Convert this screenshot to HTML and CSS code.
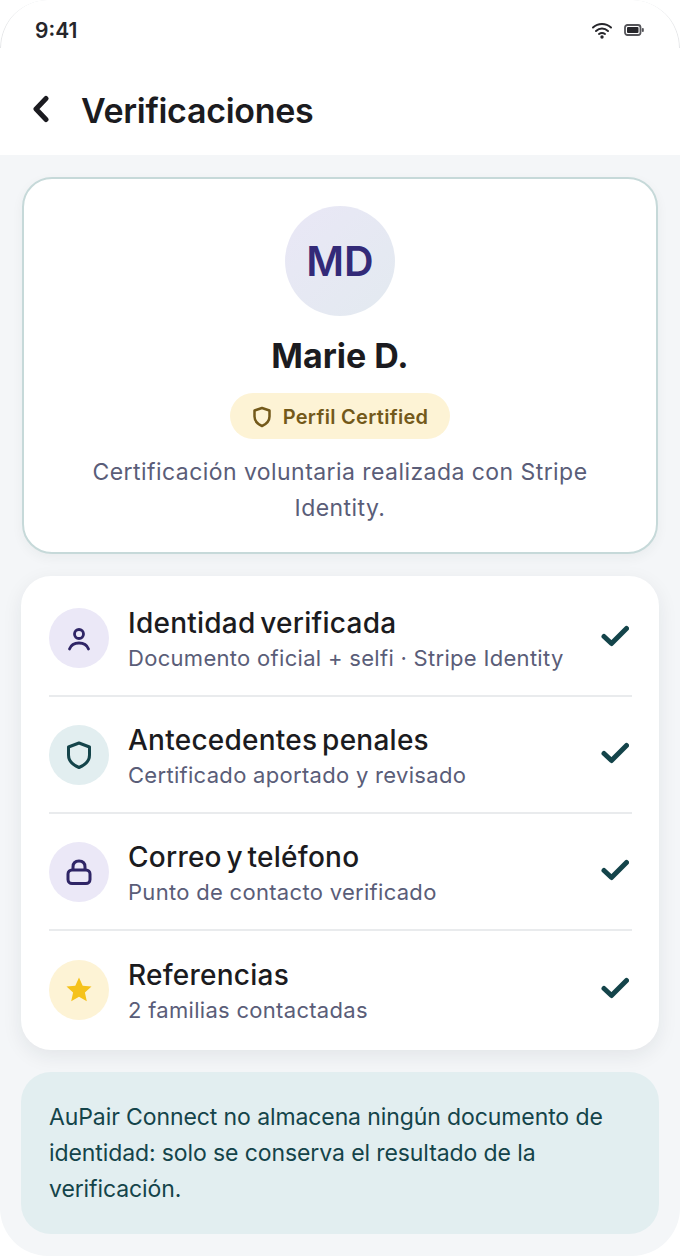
FILE: index.html
```html
<!DOCTYPE html>
<html lang="es">
<head>
  <meta charset="UTF-8">
  <meta name="viewport" content="width=device-width, initial-scale=1.0">
  <title>Verificaciones</title>
  <link rel="stylesheet" href="styles.css">
</head>
<body>
  <div class="phone">
    <div class="top">
      <div class="status">
        <span class="time">9:41</span>
        <div class="status-icons">
          <svg width="22" height="18" viewBox="0 0 22 18" fill="none" stroke="#26262b" stroke-width="2" stroke-linecap="round">
            <path d="M2 6.5C7 1.8 15 1.8 20 6.5"/>
            <path d="M5 10C8.5 6.8 13.500 6.800 17 10"/>
            <path d="M8 13C9.800 11.700 12.200 11.700 14 13"/>
            <circle cx="11" cy="16" r="1.700" fill="#26262b" stroke="none"/>
          </svg>
          <svg width="20" height="12" viewBox="0 0 20 12" fill="none">
            <rect x="1" y="1" width="15.500" height="10" rx="2.500" stroke="#55555a" stroke-width="1.800"/>
            <rect x="3" y="3" width="11.500" height="6" rx="1" fill="#26262b"/>
            <rect x="17.800" y="4" width="2" height="4" rx="1" fill="#55555a"/>
          </svg>
        </div>
      </div>
      <header class="header">
        <svg class="back" width="20" height="28" viewBox="0 0 20 28" fill="none" stroke="#1b1b20" stroke-width="5" stroke-linecap="round" stroke-linejoin="round">
          <path d="M15 3.500L5 14L15 24.500"/>
        </svg>
        <h1>Verificaciones</h1>
      </header>
    </div>

    <main class="content">
      <section class="hero">
        <div class="avatar">MD</div>
        <h2>Marie D.</h2>
        <div class="badge">
          <svg width="20" height="22" viewBox="0 0 20 22" fill="none" stroke="#73591a" stroke-width="2.500" stroke-linejoin="round">
            <path d="M10 2L17.500 4.500V10.500C17.500 15 14.500 18 10 20C5.500 18 2.500 15 2.500 10.500V4.500Z"/>
          </svg>
          <span>Perfil Certified</span>
        </div>
        <p>Certificación voluntaria realizada con Stripe Identity.</p>
      </section>

      <section class="list">
        <div class="row">
          <div class="icon icon-purple">
            <svg width="24" height="26" viewBox="0 0 24 26" fill="none" stroke="#2f2566" stroke-width="2.800" stroke-linecap="round">
              <circle cx="12" cy="9" r="4.500"/>
              <path d="M2.500 24C4 20 8 18 12 18C16 18 20 20 21.500 24"/>
            </svg>
          </div>
          <div class="text">
            <h3>Identidad verificada</h3>
            <p>Documento oficial + selfi · Stripe Identity</p>
          </div>
          <svg class="check" width="28" height="22" viewBox="0 0 28 22" fill="none" stroke="#14444a" stroke-width="5" stroke-linecap="round" stroke-linejoin="round"><path d="M3 11.500L10.500 18.500L25.500 3.500"/></svg>
        </div>
        <div class="row">
          <div class="icon icon-teal">
            <svg width="26" height="28" viewBox="0 0 26 28" fill="none" stroke="#14444a" stroke-width="3" stroke-linejoin="round">
              <path d="M13 2L23.500 6V14C23.500 20 19 24 13 26.500C7 24 2.500 20 2.500 14V6Z"/>
            </svg>
          </div>
          <div class="text">
            <h3>Antecedentes penales</h3>
            <p>Certificado aportado y revisado</p>
          </div>
          <svg class="check" width="28" height="22" viewBox="0 0 28 22" fill="none" stroke="#14444a" stroke-width="5" stroke-linecap="round" stroke-linejoin="round"><path d="M3 11.500L10.500 18.500L25.500 3.500"/></svg>
        </div>
        <div class="row">
          <div class="icon icon-purple">
            <svg width="26" height="26" viewBox="0 0 26 26" fill="none" stroke="#2f2566" stroke-width="3">
              <rect x="2" y="11" width="22" height="13.500" rx="4"/>
              <path d="M7 11V8C7 4 9.500 2 13 2C16.500 2 19 4 19 8V11"/>
            </svg>
          </div>
          <div class="text">
            <h3>Correo y teléfono</h3>
            <p>Punto de contacto verificado</p>
          </div>
          <svg class="check" width="28" height="22" viewBox="0 0 28 22" fill="none" stroke="#14444a" stroke-width="5" stroke-linecap="round" stroke-linejoin="round"><path d="M3 11.500L10.500 18.500L25.500 3.500"/></svg>
        </div>
        <div class="row">
          <div class="icon icon-yellow">
            <svg width="26" height="25" viewBox="0 0 26 25" fill="#f5c21b">
              <path d="M13 0.500L16.700 8.700L25.500 9.600L18.900 15.500L20.800 24.200L13 19.700L5.200 24.200L7.100 15.500L0.500 9.600L9.300 8.700Z"/>
            </svg>
          </div>
          <div class="text">
            <h3>Referencias</h3>
            <p>2 familias contactadas</p>
          </div>
          <svg class="check" width="28" height="22" viewBox="0 0 28 22" fill="none" stroke="#14444a" stroke-width="5" stroke-linecap="round" stroke-linejoin="round"><path d="M3 11.500L10.500 18.500L25.500 3.500"/></svg>
        </div>
      </section>

      <section class="note">
        AuPair Connect no almacena ningún documento de identidad: solo se conserva el resultado de la verificación.
      </section>
    </main>
  </div>
</body>
</html>
```

FILE: styles.css
```css
* {
  box-sizing: border-box;
}

html, body {
  margin: 0;
  height: 100%;
  background: #ffffff;
}

body {
  font-family: Inter, "Liberation Sans", sans-serif;
  overflow: hidden;
}

.phone {
  width: 680px;
  height: 1256px;
  border-radius: 48px;
  overflow: hidden;
  background: #f4f6f8;
}

.top {
  position: relative;
  background: #ffffff;
  height: 155px;
}

/* faint hairline on the two top corners of the device */
.top::before {
  content: "";
  position: absolute;
  top: 0;
  left: 0;
  right: 0;
  height: 48px;
  border: 1px solid #e4e5e7;
  border-width: 0 1px;
  border-radius: 48px 48px 0 0;
}

.status {
  display: flex;
  justify-content: space-between;
  align-items: center;
  height: 60px;
  padding: 0 36px 0 35px;
}

.time {
  font-size: 21px;
  font-weight: 600;
  color: #26262b;
}

.status-icons {
  display: flex;
  align-items: center;
  gap: 11px;
}

.header {
  display: flex;
  align-items: center;
  gap: 30px;
  padding: 30px 0 0 31px;
}

.back {
  margin-top: -4px;
}

.header h1 {
  margin: 0;
  font-size: 34px;
  font-weight: 600;
  letter-spacing: -0.3px;
  color: #1b1b20;
}

.content {
  padding: 22px 21px 0;
  display: flex;
  flex-direction: column;
  gap: 22px;
}

.hero {
  height: 377px;
  margin: 0 1px;
  background: #ffffff;
  border: 2px solid #c6d9d9;
  border-radius: 30px;
  box-shadow: 0 4px 12px rgba(30, 50, 60, 0.05);
  display: flex;
  flex-direction: column;
  align-items: center;
  padding-top: 27px;
}

.avatar {
  width: 110px;
  height: 110px;
  border-radius: 50%;
  background: linear-gradient(135deg, #e9e7f6, #e3eaf0);
  color: #332a78;
  font-size: 41px;
  font-weight: 600;
  display: flex;
  align-items: center;
  justify-content: center;
}

.hero h2 {
  margin: 20px 0 0;
  font-size: 34px;
  line-height: 40px;
  font-weight: 700;
  color: #1b1b20;
}

.badge {
  margin-top: 17px;
  height: 46px;
  width: 220px;
  padding-top: 1px;
  border-radius: 23px;
  background: #fdf3d5;
  color: #73591a;
  font-size: 20px;
  font-weight: 600;
  letter-spacing: 0.3px;
  display: flex;
  align-items: center;
  justify-content: center;
  gap: 11px;
}

.hero p {
  margin: 15px 0 0;
  width: 520px;
  text-align: center;
  font-size: 23px;
  line-height: 36px;
  letter-spacing: 0.44px;
  color: #5a5d78;
}

.list {
  height: 474px;
  background: #ffffff;
  border-radius: 30px;
  box-shadow: 0 6px 20px rgba(30, 40, 50, 0.08);
  padding: 4px 27px 0 28px;
}

.row {
  height: 117px;
  display: flex;
  align-items: center;
  border-bottom: 2px solid #e9ebed;
}

.row:last-child {
  border-bottom: 0;
}

.icon {
  width: 60px;
  height: 60px;
  flex: none;
  border-radius: 50%;
  display: flex;
  align-items: center;
  justify-content: center;
}

.icon-purple {
  background: #ebe8f7;
}

.icon-teal {
  background: #e2eef0;
}

.icon-yellow {
  background: #fdf3d5;
}

.text {
  flex: 1;
  margin-left: 19px;
  padding-top: 6px;
}

.text h3 {
  margin: 0;
  font-size: 28px;
  line-height: 34px;
  font-weight: 500;
  letter-spacing: 0.25px;
  word-spacing: -3px;
  color: #1b1b20;
}

.text p {
  margin: 0;
  font-size: 22px;
  line-height: 36px;
  letter-spacing: 0.3px;
  color: #5a5d78;
}

.check {
  margin-right: 3px;
  margin-top: -4px;
}

.note {
  height: 162px;
  background: #e2eef0;
  border-radius: 30px;
  padding: 27px 28px;
  font-size: 23px;
  line-height: 36px;
  letter-spacing: -0.1px;
  color: #14444a;
}
```
